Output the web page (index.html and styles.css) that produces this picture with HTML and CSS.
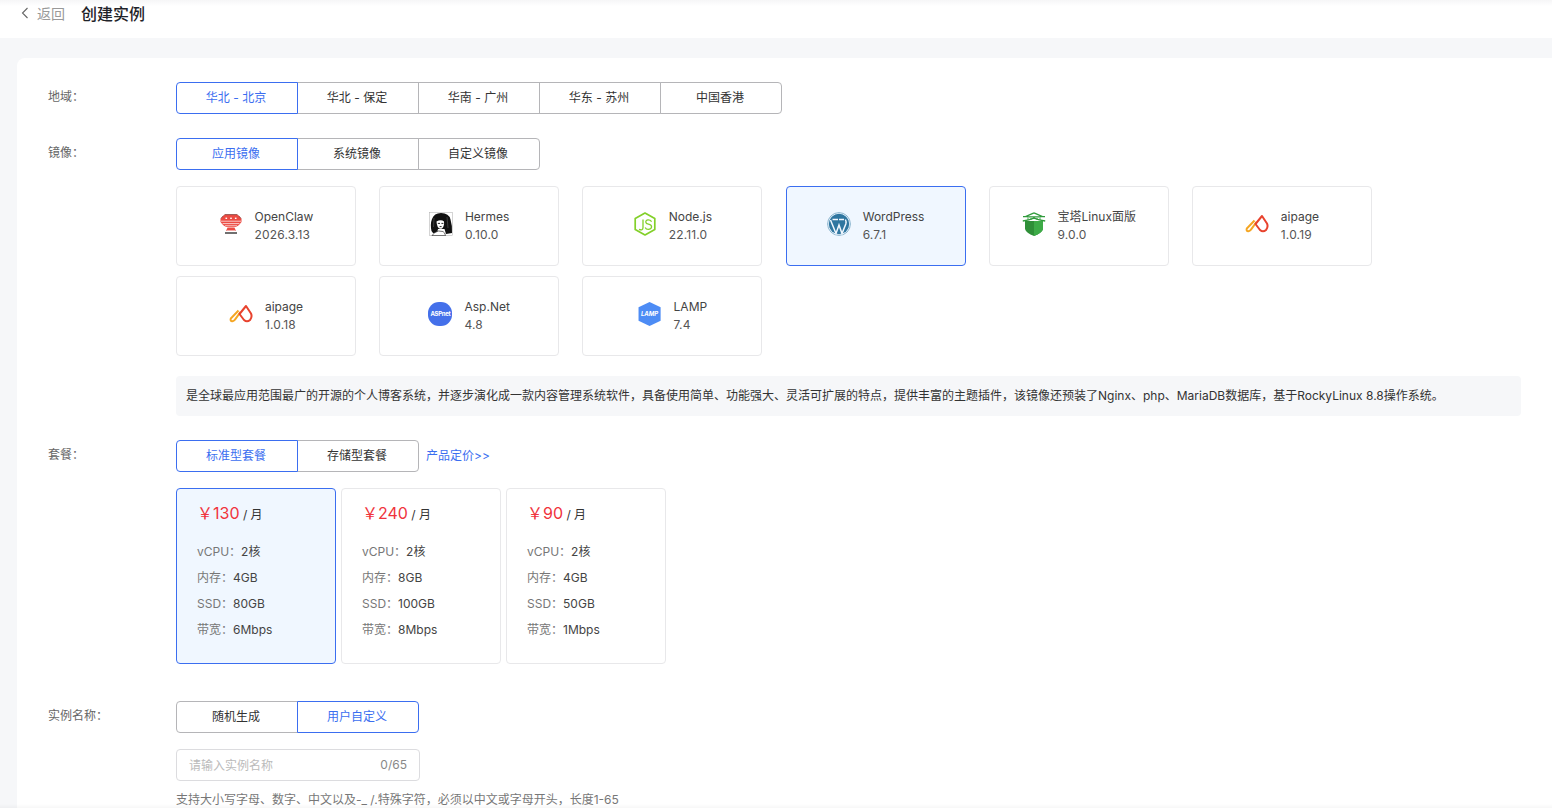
FILE: index.html
```html
<!DOCTYPE html>
<html lang="zh-CN">

<head>
  <meta charset="UTF-8">
  <title>创建实例</title>
  <link rel="stylesheet" href="styles.css">
</head>

<body>
  <svg class="defs" width="0" height="0">
    <symbol id="icon-aipage" viewBox="0 0 24 24">
      <path d="M9.5 8.5 L1.8 16.5 Q1 19 3.3 19.2 Q5 19 5.8 17.8 L11.5 10" fill="none" stroke="#f5a623" stroke-width="2"/>
      <path d="M17 4 L22 11.5 Q23.5 15 21 18 Q18 20.5 15 18 L10.5 12 Z" fill="none" stroke="#e8432e" stroke-width="2" stroke-linejoin="round"/>
    </symbol>
  </svg>

  <header class="topbar">
    <a class="back" href="#">
      <svg width="8" height="12" viewBox="0 0 8 12"><path d="M6.5 1 L1.5 6 L6.5 11" fill="none" stroke="#666" stroke-width="1.1"/></svg>
      <span>返回</span>
    </a>
    <h1>创建实例</h1>
  </header>

  <main class="panel">
    <section class="row">
      <div class="label">地域：</div>
      <div class="field">
        <div class="tabs">
          <button class="tab active">华北 - 北京</button>
          <button class="tab">华北 - 保定</button>
          <button class="tab">华南 - 广州</button>
          <button class="tab">华东 - 苏州</button>
          <button class="tab">中国香港</button>
        </div>
      </div>
    </section>

    <section class="row">
      <div class="label">镜像：</div>
      <div class="field">
        <div class="tabs">
          <button class="tab active">应用镜像</button>
          <button class="tab">系统镜像</button>
          <button class="tab">自定义镜像</button>
        </div>
        <div class="images">
          <div class="image-card">
            <svg class="logo" viewBox="0 0 24 24">
              <path d="M6 2.5 H18 L20 4 L22.5 7 V10 L20 13 L17 15 H7 L4 13 L1.5 10 V7 L4 4 Z" fill="#ec4b43"/>
              <path d="M2 9.2 H22 M3.6 11.6 H20.4 M6 13.8 H18" stroke="#fff" stroke-width=".7"/>
              <rect x="6.5" y="5.6" width="1.6" height="1.4" fill="#fff"/><rect x="11.2" y="5.6" width="1.6" height="1.4" fill="#fff"/><rect x="15.9" y="5.6" width="1.6" height="1.4" fill="#fff"/>
              <path d="M5.5 2.6 H18.5 M1.8 6.5 L4.5 3.6 M22.2 6.5 L19.5 3.6" stroke="#5a2320" stroke-width=".6"/>
              <path d="M8.5 15.5 H15.5 L17 19 H7 Z" fill="#ec4b43"/>
              <path d="M6 21 H18" stroke="#333" stroke-width="1.4"/>
              <path d="M7.5 18.6 H16.5" stroke="#fff" stroke-width=".6"/>
            </svg>
            <div class="image-text"><div>OpenClaw</div><div class="ver">2026.3.13</div></div>
          </div>
          <div class="image-card">
            <svg class="logo" viewBox="0 0 24 24">
              <rect x=".3" y=".3" width="23.4" height="23.4" fill="#fff" stroke="#aaa" stroke-width=".5"/>
              <path d="M2.5 19 Q1 12 3 7 Q5 1 12 1 Q20 1 21.5 7.5 Q23.5 14 23 21 L17 22 L15.5 17 L9 17 L8 21 L4 21 Z" fill="#111"/>
              <path d="M7.5 9.5 Q12 7 15 9.5 Q15.5 14 13 16.5 Q10 17.5 8.8 15 Q7.5 12 7.5 9.5 Z" fill="#fff"/>
              <path d="M8.8 11.4 H11 M12.4 11.4 H14.4 M10.6 14.6 H12.6" stroke="#111" stroke-width=".9"/>
              <path d="M3 23.6 Q5 20 9.5 19 L14 19.5 Q16 20.5 16.5 23.6 Z" fill="#fff" stroke="#111" stroke-width=".6"/>
              <path d="M18 5 L19 16 M5 6 L4.5 15" stroke="#666" stroke-width=".5"/>
            </svg>
            <div class="image-text"><div>Hermes</div><div class="ver">0.10.0</div></div>
          </div>
          <div class="image-card">
            <svg class="logo" viewBox="0 0 24 24">
              <path d="M12 1 L21.8 6.5 V17.5 L12 23 L2.2 17.5 V6.5 Z" fill="none" stroke="#83d02a" stroke-width="1.7" stroke-linejoin="round"/>
              <path d="M10 7.5 V15.5 Q10 19 6 17.4" fill="none" stroke="#83d02a" stroke-width="1.3"/>
              <path d="M18.6 9.6 Q17.2 7.8 15 7.9 Q12.6 8.1 12.8 10.2 Q13 11.8 15.4 12.2 Q18.7 12.8 18.6 15 Q18.2 17.3 15.2 17.3 Q13 17.3 12.2 15.4" fill="none" stroke="#83d02a" stroke-width="1.3"/>
            </svg>
            <div class="image-text"><div>Node.js</div><div class="ver">22.11.0</div></div>
          </div>
          <div class="image-card selected">
            <svg class="logo" viewBox="0 0 24 24">
              <circle cx="12" cy="12" r="11.4" fill="none" stroke="#6fa3c2" stroke-width=".8"/>
              <circle cx="12" cy="12" r="10.2" fill="#2f76a0"/>
              <path d="M3.5 8 L9 21.5 L12 13 L15 21.5 L18.8 12 Q19.6 9.8 18.4 7.5 M5.5 7.6 H11 M12 7.6 H17" fill="none" stroke="#f1f7fe" stroke-width="1.5"/>
            </svg>
            <div class="image-text"><div>WordPress</div><div class="ver">6.7.1</div></div>
          </div>
          <div class="image-card">
            <svg class="logo" viewBox="0 0 24 24">
              <path d="M3 9 H21 V17 Q20 21 12 24 Q4 21 3 17 Z" fill="#2f8f38"/>
              <path d="M12 9 H21 V17 Q20 21 12 24 Z" fill="#3dab47"/>
              <path d="M12 .8 L3.5 4.6 H1 M12 .8 L20.5 4.6 H23 M4.5 4.8 H19.5 M.8 9 Q7 8.2 12 6.2 Q17 8.2 23.2 9" fill="none" stroke="#2f9a3b" stroke-width="1.3"/>
              <path d="M6 6 V8 M9 6 V8 M15 6 V8 M18 6 V8" stroke="#2f9a3b" stroke-width=".9"/>
            </svg>
            <div class="image-text"><div>宝塔Linux面版</div><div class="ver">9.0.0</div></div>
          </div>
          <div class="image-card">
            <svg class="logo" viewBox="0 0 24 24"><use href="#icon-aipage"/></svg>
            <div class="image-text"><div>aipage</div><div class="ver">1.0.19</div></div>
          </div>
          <div class="image-card">
            <svg class="logo" viewBox="0 0 24 24"><use href="#icon-aipage"/></svg>
            <div class="image-text"><div>aipage</div><div class="ver">1.0.18</div></div>
          </div>
          <div class="image-card">
            <div class="logo asp">ASPnet</div>
            <div class="image-text"><div>Asp.Net</div><div class="ver">4.8</div></div>
          </div>
          <div class="image-card">
            <div class="logo lamp">LAMP</div>
            <div class="image-text"><div>LAMP</div><div class="ver">7.4</div></div>
          </div>
        </div>
        <p class="desc">是全球最应用范围最广的开源的个人博客系统，并逐步演化成一款内容管理系统软件，具备使用简单、功能强大、灵活可扩展的特点，提供丰富的主题插件，该镜像还预装了Nginx、php、MariaDB数据库，基于RockyLinux 8.8操作系统。</p>
      </div>
    </section>

    <section class="row">
      <div class="label">套餐：</div>
      <div class="field">
        <div class="plan-head">
          <div class="tabs">
            <button class="tab active">标准型套餐</button>
            <button class="tab">存储型套餐</button>
          </div>
          <a class="price-link" href="#">产品定价&gt;&gt;</a>
        </div>
        <div class="plans">
          <div class="plan selected">
            <div class="price"><b>￥130</b> / 月</div>
            <div class="spec"><span>vCPU：</span>2核</div>
            <div class="spec"><span>内存：</span>4GB</div>
            <div class="spec"><span>SSD：</span>80GB</div>
            <div class="spec"><span>带宽：</span>6Mbps</div>
          </div>
          <div class="plan">
            <div class="price"><b>￥240</b> / 月</div>
            <div class="spec"><span>vCPU：</span>2核</div>
            <div class="spec"><span>内存：</span>8GB</div>
            <div class="spec"><span>SSD：</span>100GB</div>
            <div class="spec"><span>带宽：</span>8Mbps</div>
          </div>
          <div class="plan">
            <div class="price"><b>￥90</b> / 月</div>
            <div class="spec"><span>vCPU：</span>2核</div>
            <div class="spec"><span>内存：</span>4GB</div>
            <div class="spec"><span>SSD：</span>50GB</div>
            <div class="spec"><span>带宽：</span>1Mbps</div>
          </div>
        </div>
      </div>
    </section>

    <section class="row name-row">
      <div class="label">实例名称：</div>
      <div class="field">
        <div class="tabs">
          <button class="tab">随机生成</button>
          <button class="tab active">用户自定义</button>
        </div>
        <div class="name-input">
          <span class="placeholder">请输入实例名称</span>
          <span class="count">0/65</span>
        </div>
        <p class="hint">支持大小写字母、数字、中文以及-_ /.特殊字符，必须以中文或字母开头，长度1-65</p>
      </div>
    </section>
  </main>
</body>

</html>
```

FILE: styles.css
```css
* {
  margin: 0;
  padding: 0;
  box-sizing: border-box;
  font-family: Inter, 'Noto Sans CJK SC', sans-serif;
}

html,
body {
  height: 808px;
  overflow: hidden;
}

body {
  background: #f6f7f9;
  color: #333;
  font-size: 12px;
}

body::after {
  content: '';
  position: fixed;
  left: 0;
  right: 0;
  bottom: 0;
  height: 4px;
  background: linear-gradient(to bottom, rgba(0, 0, 0, 0), rgba(0, 0, 0, 0.03));
}

.defs {
  position: absolute;
}

.topbar {
  display: flex;
  align-items: center;
  height: 38px;
  padding: 0 0 13px 21px;
  background: linear-gradient(to bottom, #f6f6f7, #fff 6px);
}

.back {
  display: flex;
  align-items: center;
  gap: 8px;
  color: #999;
  font-size: 14px;
  text-decoration: none;
}

.topbar h1 {
  margin-left: 16px;
  font-size: 16px;
  font-weight: 500;
  color: #1f2329;
}

.panel {
  margin: 20px 0 0 17px;
  height: 760px;
  padding: 24px 31px 0;
  background: #fff;
  border-radius: 8px 0 0 0;
}

.row {
  display: flex;
  margin-bottom: 24px;
}

.name-row {
  margin-top: 37px;
}

.label {
  width: 128px;
  flex: none;
  padding-top: 6px;
  color: #666;
  line-height: 17px;
}

.field {
  flex: 1;
  min-width: 0;
}

.tabs {
  display: flex;
}

.tab {
  width: 122px;
  height: 32px;
  margin-left: -1px;
  padding: 0 2px 3px 0;
  background: #fff;
  border: 1px solid #b5b5b8;
  color: #333;
  font-size: 12px;
}

.tab:first-child {
  margin-left: 0;
  border-radius: 4px 0 0 4px;
}

.tab:last-child {
  border-radius: 0 4px 4px 0;
}

.tab.active {
  position: relative;
  border-color: #3b6ef0;
  color: #3b6ef0;
}

.images {
  display: flex;
  flex-wrap: wrap;
  gap: 10px 23.2px;
  margin-top: 16px;
}

.image-card {
  display: flex;
  align-items: center;
  justify-content: center;
  gap: 12px;
  width: 180px;
  height: 80px;
  background: #fff;
  border: 1px solid #e8e8ea;
  border-radius: 4px;
  line-height: 18px;
  color: #444;
}

.image-card.selected {
  background: #f0f7ff;
  border-color: #3b6ef0;
}

.ver {
  color: #555;
  letter-spacing: 0.15px;
}

.logo {
  width: 24px;
  height: 24px;
  flex: none;
  margin-bottom: 4px;
}

.asp {
  display: flex;
  align-items: center;
  justify-content: center;
  background: #4470ea;
  border-radius: 11px;
  color: #fff;
  font-size: 6px;
  font-weight: 700;
  letter-spacing: -0.3px;
}

.lamp {
  display: flex;
  align-items: center;
  justify-content: center;
  background: #4d8cf5;
  clip-path: polygon(50% 0, 96% 22%, 96% 78%, 50% 100%, 4% 78%, 4% 22%);
  color: #fff;
  font-size: 6px;
  font-style: italic;
  font-weight: 700;
}

.desc {
  display: flex;
  align-items: center;
  height: 40px;
  margin-top: 20px;
  padding: 0 0 3px 10px;
  background: #f6f7f9;
  border-radius: 4px;
  color: #333;
}

.plan-head {
  display: flex;
  align-items: center;
  gap: 7px;
}

.price-link {
  padding-bottom: 3px;
  color: #3b6ef0;
  text-decoration: none;
}

.plans {
  display: flex;
  gap: 5px;
  margin-top: 16px;
}

.plan {
  width: 160px;
  height: 176px;
  padding: 12px 20px 0;
  background: #fff;
  border: 1px solid #e8e8ea;
  border-radius: 4px;
  color: #444;
}

.plan.selected {
  background: #f0f7ff;
  border-color: #3b6ef0;
}

.price {
  height: 36px;
  line-height: 24px;
  margin-bottom: 2px;
  color: #333;
}

.price b {
  font-size: 16px;
  font-weight: 400;
  color: #f0333c;
}

.spec {
  height: 26px;
  line-height: 26px;
}

.spec span {
  color: #777;
}

.name-input {
  display: flex;
  align-items: center;
  justify-content: space-between;
  width: 244px;
  height: 32px;
  margin-top: 16px;
  padding: 0 12px 2px;
  border: 1px solid #dcdcdf;
  border-radius: 4px;
}

.placeholder {
  color: #bbb;
}

.count {
  color: #888;
}

.hint {
  margin-top: 10px;
  color: #777;
  line-height: 17px;
}
```
